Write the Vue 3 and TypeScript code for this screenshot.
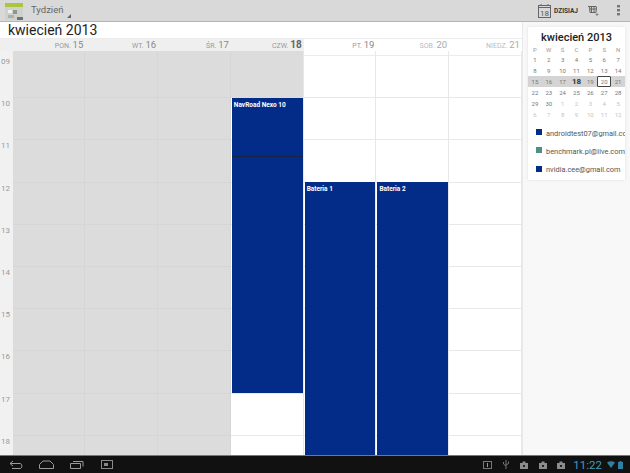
<script setup lang="ts">
interface Day {
  short: string;
  num: number;
  past: boolean;
  today?: boolean;
  weekend?: boolean;
}

const days: Day[] = [
  { short: 'PON.', num: 15, past: true },
  { short: 'WT.', num: 16, past: true },
  { short: 'ŚR.', num: 17, past: true },
  { short: 'CZW.', num: 18, past: false, today: true },
  { short: 'PT.', num: 19, past: false },
  { short: 'SOB.', num: 20, past: false, weekend: true },
  { short: 'NIEDZ.', num: 21, past: false, weekend: true },
];

const hours = ['09', '10', '11', '12', '13', '14', '15', '16', '17', '18'];

const weekLetters = ['P', 'W', 'Ś', 'C', 'P', 'S', 'N'];

interface Cell {
  n: number;
  other?: boolean;
  bold?: boolean;
  box?: boolean;
}

const weeks: Cell[][] = [
  [1, 2, 3, 4, 5, 6, 7].map((n) => ({ n })),
  [8, 9, 10, 11, 12, 13, 14].map((n) => ({ n })),
  [15, 16, 17, 18, 19, 20, 21].map((n) => ({ n, bold: n === 18, box: n === 20 })),
  [22, 23, 24, 25, 26, 27, 28].map((n) => ({ n })),
  [29, 30, 1, 2, 3, 4, 5].map((n, i) => ({ n, other: i > 1 })),
  [6, 7, 8, 9, 10, 11, 12].map((n) => ({ n, other: true })),
];

const accounts = [
  { mail: 'androidtest07@gmail.com', color: '#032b88' },
  { mail: 'benchmark.pl@live.com', color: '#4f8f84' },
  { mail: 'nvidia.cee@gmail.com', color: '#032b88' },
];
</script>

<template>
  <div class="screen">
    <header class="action-bar">
      <svg class="app-icon" width="18" height="18" viewBox="0 0 18 18">
        <rect width="18" height="17" y="1" fill="#cfd2cc" />
        <rect width="18" height="4" y="1" fill="#a9c63c" />
        <rect x="3" y="8" width="4" height="3" fill="#f2f2f2" />
        <rect x="8" y="8" width="4" height="4" fill="#8e9690" />
        <rect x="3" y="13" width="6" height="3" fill="#aab0ab" />
        <rect x="12" y="15" width="6" height="3" fill="#6d736f" />
      </svg>
      <div class="view-select">Tydzień</div>
      <div class="spacer"></div>
      <svg class="today-icon" width="13" height="14" viewBox="0 0 13 14">
        <rect x="0.5" y="1.5" width="12" height="12" fill="none" stroke="#666" />
        <path d="M0.5 3.5H12.5M3 0V2M10 0V2" stroke="#666" fill="none" />
        <text x="6.5" y="11.5" text-anchor="middle" class="today-num">18</text>
      </svg>
      <span class="today-label">DZISIAJ</span>
      <svg class="add-icon" width="11" height="11" viewBox="0 0 11 11">
        <path d="M0 1.5H8M1.5 1.5L2 7.5H8L8.5 1.5M3.5 1.5V7.5M6 1.5V7.5M1.5 4H8.5" stroke="#666" fill="none" />
        <path d="M9 8V11M7.5 9.5H10.5" stroke="#888" fill="none" />
      </svg>
      <svg class="more-icon" width="3" height="11" viewBox="0 0 3 11">
        <rect width="3" height="2.4" y="0" fill="#777" />
        <rect width="3" height="2.4" y="4" fill="#777" />
        <rect width="3" height="2.4" y="8" fill="#777" />
      </svg>
    </header>

    <div class="content">
      <main class="calendar">
        <h1 class="month-title">kwiecień 2013</h1>
        <div class="week-head">
          <div class="gutter-head"></div>
          <div
            v-for="d in days"
            :key="d.num"
            class="day-head"
            :class="{ shaded: d.past || d.today, weekend: d.weekend, today: d.today }"
          >
            <span class="dow">{{ d.short }}</span> <span class="dnum">{{ d.num }}</span>
          </div>
        </div>
        <div class="grid">
          <div class="gutter">
            <div class="lead"></div>
            <div v-for="h in hours" :key="h" class="gutter-cell">{{ h }}</div>
          </div>
          <div v-for="d in days" :key="d.num" class="day-col" :class="{ past: d.past, today: d.today }">
            <div class="lead"></div>
            <div v-for="h in hours" :key="h" class="hour"></div>
            <template v-if="d.today">
              <div class="today-past"></div>
              <div class="event ev-navroad">NavRoad Nexo 10</div>
              <div class="now-line"></div>
            </template>
            <div v-if="d.num === 19" class="event ev-battery">Bateria 1</div>
            <div v-if="d.num === 20" class="event ev-battery">Bateria 2</div>
          </div>
        </div>
      </main>

      <aside class="side">
        <div class="card">
          <div class="mini-title">kwiecień 2013</div>
          <div class="mini-row letters">
            <span v-for="(l, i) in weekLetters" :key="i">{{ l }}</span>
          </div>
          <div v-for="(w, wi) in weeks" :key="wi" class="mini-row" :class="{ current: wi === 2 }">
            <span
              v-for="(c, ci) in w"
              :key="ci"
              :class="{ other: c.other, bold: c.bold, box: c.box }"
            >{{ c.n }}</span>
          </div>
          <div class="accounts">
            <div v-for="a in accounts" :key="a.mail" class="account">
              <i class="swatch" :style="{ background: a.color }"></i>
              <span class="mail">{{ a.mail }}</span>
            </div>
          </div>
        </div>
      </aside>
    </div>

    <footer class="nav-bar">
      <svg class="nav-back" width="14" height="10" viewBox="0 0 14 10">
        <path d="M4 1L1 3.5L4 6M1 3.5H11C13.5 3.5 13.5 8.5 11 8.5H3" fill="none" stroke="#9a9a9a" />
      </svg>
      <svg class="nav-home" width="15" height="9" viewBox="0 0 15 9">
        <path d="M0.5 8.5V4.5L4 1H11L14.5 4.5V8.5Z" fill="none" stroke="#9a9a9a" />
      </svg>
      <svg class="nav-recent" width="14" height="9" viewBox="0 0 14 9">
        <path d="M0.5 3.5H10.5V8.5H0.5ZM3 1.5H13V6.5" fill="none" stroke="#9a9a9a" />
      </svg>
      <svg class="nav-shot" width="12" height="9" viewBox="0 0 12 9">
        <rect x="0.5" y="0.5" width="11" height="8" fill="none" stroke="#8a8a8a" />
        <rect x="3" y="3" width="4" height="3" fill="#8a8a8a" />
      </svg>
      <div class="spacer"></div>
      <svg class="st-a" width="9" height="8" viewBox="0 0 9 8">
        <rect x="0.5" y="0.5" width="8" height="7" fill="none" stroke="#777" />
        <rect x="4" y="2" width="1" height="4" fill="#999" />
      </svg>
      <svg class="st-usb" width="6" height="9" viewBox="0 0 6 9">
        <path d="M3 0V9M0.5 2V4L3 6M5.5 1.5V3.5L3 5" fill="none" stroke="#777" />
      </svg>
      <svg v-for="n in 3" :key="n" class="st-bag" width="8" height="8" viewBox="0 0 8 8">
        <path d="M0 2H2.5V0.5H5.5V2H8V8H0Z" fill="#8c8c8c" />
        <rect x="3" y="4" width="2" height="2" fill="#222" />
      </svg>
      <span class="clock">11:22</span>
      <svg class="st-wifi" width="8" height="7" viewBox="0 0 8 7">
        <path d="M0 1.5C2.5 -0.3 5.5 -0.3 8 1.5L4 7Z" fill="#2f7f9e" />
      </svg>
      <svg class="st-batt" width="5" height="8" viewBox="0 0 5 8">
        <rect x="1.5" width="2" height="1" fill="#2f7f9e" />
        <rect y="1" width="5" height="7" fill="#2f7f9e" />
      </svg>
    </footer>
  </div>
</template>

<style scoped>
.screen {
  width: 630px;
  height: 473px;
  display: flex;
  flex-direction: column;
  overflow: hidden;
  background: #fff;
  font-family: Roboto, "Liberation Sans", sans-serif;
  color: #333;
}

.spacer {
  flex: 1;
}

/* action bar */
.action-bar {
  height: 22px;
  flex: none;
  display: flex;
  align-items: center;
  background: #d9d9d9;
  border-bottom: 1px solid #b5b5b5;
  box-sizing: border-box;
}

.app-icon {
  margin-left: 5px;
}

.view-select {
  position: relative;
  margin-left: 8px;
  font-size: 9.5px;
  color: #666;
  padding-right: 8px;
  margin-top: -2px;
}

.view-select::after {
  content: "";
  position: absolute;
  right: 0;
  bottom: -3px;
  border-left: 4px solid transparent;
  border-bottom: 4px solid #666;
}

.today-icon {
  margin-right: 3px;
}

.today-num {
  font-size: 8px;
  fill: #555;
}

.today-label {
  font-size: 6.5px;
  font-weight: 700;
  color: #333;
  margin-right: 10px;
}

.add-icon {
  margin-right: 18px;
}

.more-icon {
  margin-right: 10px;
}

/* calendar */
.content {
  flex: 1;
  min-height: 0;
  display: flex;
}

.calendar {
  width: 522px;
  flex: none;
  display: flex;
  flex-direction: column;
  min-height: 0;
}

.month-title {
  margin: 0;
  height: 17px;
  line-height: 17px;
  padding-left: 8px;
  font-size: 14px;
  font-weight: 400;
  color: #222;
  flex: none;
}

.week-head {
  height: 12px;
  flex: none;
  display: flex;
  font-size: 7px;
  line-height: 12px;
  color: #999;
  border-top: 1px solid #ececec;
  margin-top: -1px;
}

.gutter-head {
  width: 12.5px;
  flex: none;
  background: #efefef;
}

.day-head {
  flex: 1;
  text-align: right;
  padding-right: 2px;
}

.day-head.shaded {
  background: #efefef;
}

.dnum {
  font-size: 9.5px;
  color: #888;
}

.day-head.today .dnum {
  font-size: 10px;
  font-weight: 700;
  color: #666;
}

.day-head.weekend {
  color: #bbb;
}

.day-head.weekend .dnum {
  color: #aaa;
}

.grid {
  flex: 1;
  min-height: 0;
  display: flex;
  overflow: hidden;
}

.gutter {
  width: 12.5px;
  flex: none;
  background: #f1f1f1;
}

.lead {
  height: 5px;
  box-sizing: border-box;
  border-bottom: 1px solid #ececec;
}

.gutter .lead {
  border-bottom: none;
}

.gutter-cell {
  height: 42.2px;
  font-size: 8px;
  line-height: 10px;
  color: #999;
  padding-left: 1px;
  padding-top: 1px;
  box-sizing: border-box;
}

.day-col {
  flex: 1;
  position: relative;
  border-right: 1px solid #e8e8e8;
  box-sizing: border-box;
}

.day-col.past {
  background: #dcdcdc;
  border-right-color: #d6d6d6;
}

.day-col.past .lead,
.day-col.today .lead {
  border-bottom-color: transparent;
}

.hour {
  height: 42.2px;
  border-bottom: 1px solid #e8e8e8;
  box-sizing: border-box;
}

.day-col.past .hour {
  border-bottom-color: #d6d6d6;
}

.today-past {
  position: absolute;
  inset: 0 0 auto 0;
  height: 47px;
  background: #dcdcdc;
}

.event {
  position: absolute;
  left: 1px;
  right: 0;
  background: #032b88;
  color: #fff;
  font-size: 6.5px;
  font-weight: 700;
  padding: 3px 2px;
  box-sizing: border-box;
  line-height: 8px;
}

.ev-navroad {
  top: 47px;
  height: 295px;
}

.ev-battery {
  top: 131px;
  bottom: 0;
}

.now-line {
  position: absolute;
  left: 1px;
  right: 0;
  top: 105px;
  height: 1px;
  background: #1a2340;
}

/* side panel */
.side {
  width: 108px;
  flex: none;
  background: #f8f8f8;
  border-left: 1px solid #e8e8e8;
  box-sizing: border-box;
  padding: 5px 5px 0 5px;
}

.card {
  background: #fff;
  height: 153px;
  overflow: hidden;
  box-shadow: 0 0 3px rgba(0, 0, 0, 0.1);
  color: #555;
}

.mini-title {
  text-align: center;
  font-size: 11px;
  font-weight: 500;
  color: #222;
  height: 17px;
  line-height: 22px;
}

.mini-row {
  display: grid;
  grid-template-columns: repeat(7, 1fr);
  font-size: 6px;
  height: 11px;
  line-height: 11px;
  text-align: center;
  color: #777;
  align-items: center;
}

.mini-row.letters {
  color: #999;
  height: 10px;
  line-height: 11px;
}

.mini-row.current {
  background: #d4d4d4;
}

.mini-row .other {
  color: #c4c4c4;
}

.mini-row .bold {
  font-size: 8px;
  font-weight: 700;
  color: #333;
}

.mini-row .box {
  border: 1px solid #444;
  border-radius: 1px;
  background: #fff;
  height: 11px;
  line-height: 9px;
  box-sizing: border-box;
}

.accounts {
  margin-top: 4px;
}

.account {
  display: flex;
  align-items: center;
  height: 18.3px;
  padding-left: 8px;
  white-space: nowrap;
  overflow: hidden;
}

.swatch {
  width: 6px;
  height: 6px;
  flex: none;
  margin-right: 4px;
  margin-top: -2px;
}

.mail {
  font-size: 7.4px;
  color: #555;
}

/* system bar */
.nav-bar {
  height: 18px;
  flex: none;
  display: flex;
  align-items: center;
  background: #111;
  border-top: 1px solid #777;
  box-sizing: border-box;
}

.nav-back {
  margin-left: 9px;
}

.nav-home {
  margin-left: 16px;
}

.nav-recent {
  margin-left: 16px;
}

.nav-shot {
  margin-left: 17px;
}

.st-a {
  margin-right: 11px;
}

.st-usb {
  margin-right: 11px;
}

.st-bag {
  margin-right: 10.5px;
}

.clock {
  margin-left: -2.5px;
  font-size: 11.5px;
  color: #3f9cbd;
  margin-right: 5px;
}

.st-wifi {
  margin-right: 3px;
}

.st-batt {
  margin-right: 7px;
}
</style>
